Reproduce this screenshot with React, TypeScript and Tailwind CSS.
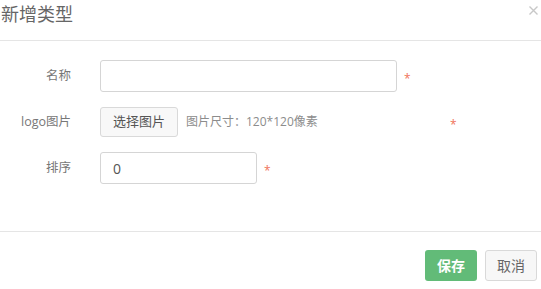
import React from 'react';

const font = { fontFamily: '"Open Sans", "Noto Sans CJK SC", sans-serif' };

function Required({ className = '' }: { className?: string }) {
  return (
    <span className={`text-[12px] leading-none text-[#f0735a] translate-y-[3px] ${className}`}>*</span>
  );
}

function FormRow({ label, children }: { label: string; children: React.ReactNode }) {
  return (
    <div className="flex items-center">
      <label className="w-[71px] shrink-0 text-right text-[12.5px] text-[#777]">{label}</label>
      <div className="ml-[29px] flex items-center">{children}</div>
    </div>
  );
}

export default function App() {
  return (
    <div className="w-[541px] h-[289px] bg-white overflow-hidden" style={font}>
      {/* Header */}
      <div className="h-[41px] border-b border-[#e5e5e5] flex justify-between items-start">
        <h3 className="pl-[1px] pt-[1px] text-[18px] leading-[27px] text-[#666] font-normal">新增类型</h3>
        <button className="mt-[6px] mr-[3px] text-[#c8c8c8]" aria-label="close">
          <svg width="9" height="9" viewBox="0 0 9 9" fill="none" stroke="currentColor" strokeWidth="1.4">
            <path d="M0.5 0.5 L8.5 8.5 M8.5 0.5 L0.5 8.5" />
          </svg>
        </button>
      </div>

      {/* Form */}
      <div className="pt-[19px] pb-[47px] flex flex-col gap-[15px]">
        <FormRow label="名称">
          <input className="w-[297px] h-[32px] border border-[#d5d5d5] rounded-[3px] px-3 text-[14px] text-[#555] outline-none" />
          <Required className="ml-[7px]" />
        </FormRow>

        <FormRow label="logo图片">
          <div className="w-[350px] flex items-center">
            <button className="w-[78px] h-[30px] bg-[#f8f8f8] border border-[#d9d9d9] rounded-[3px] text-[13px] text-[#555]">
              选择图片
            </button>
            <span className="ml-[8px] text-[12px] text-[#8c8c8c]">图片尺寸：120*120像素</span>
          </div>
          <Required />
        </FormRow>

        <FormRow label="排序">
          <input
            defaultValue="0"
            className="w-[157px] h-[32px] border border-[#d5d5d5] rounded-[3px] pl-[12px] text-[14px] text-[#555] outline-none"
          />
          <Required className="ml-[7px]" />
        </FormRow>
      </div>

      {/* Footer */}
      <div className="border-t border-[#e5e5e5] pt-[18px] pr-[4px] flex justify-end gap-[8px]">
        <button className="w-[52px] h-[31px] rounded-[3px] bg-[#62bb78] text-white text-[14px] font-semibold">
          保存
        </button>
        <button className="w-[52px] h-[31px] rounded-[3px] bg-[#f7f7f7] border border-[#d9d9d9] text-[#666] text-[14px]">
          取消
        </button>
      </div>
    </div>
  );
}
